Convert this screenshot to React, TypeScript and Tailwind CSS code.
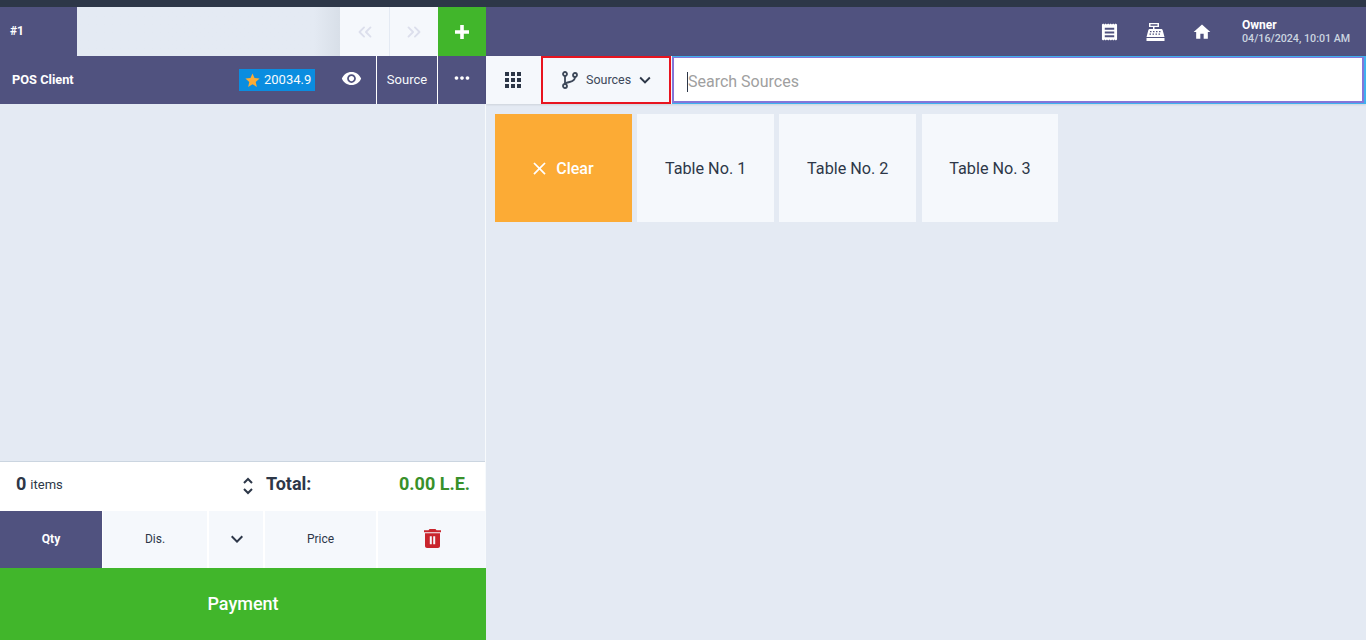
import React from "react";
import { MdRemoveRedEye, MdHome, MdMoreHoriz, MdStar, MdClose, MdKeyboardArrowDown, MdApps } from "react-icons/md";
import { LuChevronsLeft, LuChevronsRight } from "react-icons/lu";

const ReceiptIcon = () => (
  <svg width="18" height="18" viewBox="0 0 18 18" fill="currentColor" fillRule="evenodd">
    <path d="M1 1l1.3-1 1.3 1 1.3-1 1.3 1 1.4-1L9 1l1.3-1 1.3 1 1.3-1 1.3 1 1.3-1L17 1v16l-1.3 1-1.3-1-1.3 1-1.3-1-1.3 1L9 17l-1.3 1-1.4-1-1.3 1-1.3-1-1.4 1L1 17V1zm3 3.500v2h10v-2H4zm0 4v2h10v-2H4zm0 4v2h10v-2H4z" />
  </svg>
);

const RegisterIcon = () => (
  <svg width="19" height="18" viewBox="0 0 19 18" fill="currentColor" fillRule="evenodd">
    <path d="M3 0h10v4H8.500v2H15c.8 0 1.500.5 1.700 1.300L18.500 14H.5l1.800-6.700C2.500 6.500 3.200 6 4 6h3V4H3V0zm1.500 1.300v1.400h7V1.300h-7zM4 8v1.300h1.500V8H4zm3 0v1.300h1.500V8H7zm3 0v1.300h1.500V8H10zm3 0v1.300h1.500V8H13zM3.500 10.500v1.300H5v-1.300H3.500zm3 0v1.300H8v-1.300H6.500zm3 0v1.300H11v-1.300H9.500zm3 0v1.300H14v-1.300h-1.500zM.5 15h18v3H.5v-3z" />
  </svg>
);

const TrashIcon = () => (
  <svg width="17" height="19" viewBox="0 0 17 19" fill="currentColor" fillRule="evenodd">
    <path d="M5.500 0h6l1 1.200H17v2H0v-2h4.500L5.500 0zM1 4.200h15V17c0 1.100-.9 2-2 2H3c-1.100 0-2-.9-2-2V4.200zm4.800 3v8h2v-8h-2zm3.400 0v8h2v-8h-2z" />
  </svg>
);

const SortIcon = () => (
  <svg width="10" height="18" viewBox="0 0 10 18" fill="none" stroke="#2d3748" strokeWidth="2">
    <path d="M1 6l4-4 4 4" />
    <path d="M1 12l4 4 4-4" />
  </svg>
);

const BranchIcon = () => (
  <svg width="16" height="18" viewBox="0 0 16 18" fill="none" stroke="currentColor" strokeWidth="1.800">
    <circle cx="3" cy="3" r="2" />
    <circle cx="3" cy="15" r="2" />
    <circle cx="13" cy="4" r="2" />
    <path d="M3 5v8" />
    <path d="M13 6c0 3.500-3 4.500-5.500 5S3.500 12 3 13" />
  </svg>
);

const tables = ["Table No. 1", "Table No. 2", "Table No. 3"];

export default function App() {
  return (
    <div className="h-[640px] w-[1366px] overflow-hidden bg-[#e4eaf3] font-['Roboto',sans-serif] text-[#2d3748]">
      <div className="h-[7px] bg-[#2d3748]" />
      <div className="flex h-[633px]">
        {/* order side */}
        <div className="flex w-[486px] flex-col border-r border-[#f7fafc]">
          <div className="flex h-[49px] w-[486px]">
            <div className="flex w-[77px] items-center bg-[#50527f] pb-[2px] pl-[10px] text-xs font-bold text-white">#1</div>
            <div className="flex-1 bg-gradient-to-r from-[#e4eaf3] from-[90%] to-[#d8dfe8]" />
            <button className="flex w-[50px] items-center justify-center border-r border-[#e4eaf3] bg-[#f5f8fc] text-[#dcdfec]">
              <LuChevronsLeft size={22} />
            </button>
            <button className="flex w-[48px] items-center justify-center bg-[#f5f8fc] text-[#dcdfec]">
              <LuChevronsRight size={22} />
            </button>
            <button className="flex w-[48px] items-center justify-center bg-[#41b62b] text-white">
              <svg width="16" height="16" viewBox="0 0 16 16" fill="currentColor"><path d="M6.200 1h3.600v5.200H15v3.600H9.800V15H6.200V9.800H1V6.200h5.200z" /></svg>
            </button>
          </div>
          <div className="flex h-[48px] w-[486px] items-center bg-[#50527f] text-white">
            <div className="flex-1 pl-[12px] text-[12.800px] font-bold">POS Client</div>
            <div className="mr-[25px] flex h-[22px] w-[76px] items-center bg-[#0a8de0] pl-[5px] text-[13px] text-[#f7fafc]">
              <MdStar size={17} className="mr-[3px] text-[#fbab36]" />
              20034.9
            </div>
            <div className="mr-[14px] flex w-[22px] -translate-y-[2px] items-center justify-center">
              <MdRemoveRedEye size={21} />
            </div>
            <div className="flex h-full w-[61px] items-center justify-center border-l border-white text-[13px] text-[#f7fafc]">Source</div>
            <div className="flex h-full w-[49px] items-center justify-center border-l border-white">
              <MdMoreHoriz size={22} className="-translate-y-[2px]" />
            </div>
          </div>
          <div className="flex-1" />
          <div className="flex h-[50px] items-center border-t border-[#cbd5e0] bg-white pb-[6px] pl-[16px] pr-[15px]">
            <span className="text-lg font-bold leading-none">0</span>
            <span className="ml-[4px] mt-[2px] text-[13px]">items</span>
            <div className="ml-auto mr-[13px] mt-[4px]"><SortIcon /></div>
            <div className="flex w-[204px] justify-between whitespace-nowrap text-lg font-bold">
              <span>Total:</span>
              <span className="text-[#38902a]">0.00 L.E.</span>
            </div>
          </div>
          <div className="flex h-[57px] bg-white text-xs">
            <button className="w-[102px] bg-[#50527f] pb-[2px] font-bold text-white">Qty</button>
            <button className="ml-[1px] w-[104px] bg-[#f5f8fc] pb-[2px]">Dis.</button>
            <button className="ml-[2px] flex w-[54px] items-center justify-center bg-[#f5f8fc] pb-[2px] pl-[1px]">
              <MdKeyboardArrowDown size={24} />
            </button>
            <button className="ml-[2px] w-[111px] bg-[#f5f8fc] pb-[2px]">Price</button>
            <button className="ml-[2px] flex w-[107px] items-center justify-center bg-[#f5f8fc] pb-[2px] pl-[2px] text-[#c9252d]">
              <TrashIcon />
            </button>
          </div>
          <button className="h-[72px] w-[486px] bg-[#41b62b] text-lg font-medium text-white">Payment</button>
        </div>

        {/* products side */}
        <div className="flex flex-1 flex-col">
          <div className="flex h-[49px] items-center bg-[#50527f] text-white">
            <div className="ml-[615px] flex w-[17px] justify-center"><ReceiptIcon /></div>
            <div className="ml-[28px] flex w-[19px] justify-center"><RegisterIcon /></div>
            <div className="ml-[27px] flex w-[20px] justify-center"><MdHome size={22} /></div>
            <div className="ml-[30px] text-xs leading-[14px]">
              <div className="font-bold">Owner</div>
              <div className="text-[10.700px] font-medium text-[#cbd5e0]">04/16/2024, 10:01 AM</div>
            </div>
          </div>
          <div className="flex h-[48px] bg-[#f5f8fc] shadow-[0_1px_2px_rgba(0,0,0,0.1)]">
            <div className="flex w-[55px] items-center justify-center pr-[1px] text-[#2d3748]">
              <MdApps size={24} />
            </div>
            <button className="flex w-[130px] items-center border-2 border-[#e8141f] pl-[19px] text-[12.500px] text-[#3d4859]">
              <BranchIcon />
              <span className="ml-[8px]">Sources</span>
              <MdKeyboardArrowDown size={22} className="ml-[3px] text-[#2d3748]" />
            </button>
            <div className="relative ml-[1px] flex-1 bg-[#3fb0ef] py-px pr-[2px]">
              <input
                placeholder="Search Sources"
                className="h-full w-full border-2 border-t border-[#8476d8] bg-white pl-[14px] pt-[3px] text-base text-[#2d3748] outline-none placeholder:text-[#a0a0a0]"
              />
              {/* text cursor of the focused field */}
              <span className="absolute left-[15px] top-[16px] h-[20px] w-px bg-[#2d3748]" />
            </div>
          </div>
          <div className="flex gap-[5.400px] px-[9px] pt-[10px]">
            <button className="flex h-[108px] w-[136.800px] items-center justify-center gap-[6px] bg-[#fcab35] pr-[4px] pt-[2px] font-medium text-white">
              <MdClose size={21} className="-translate-y-[1px]" />
              Clear
            </button>
            {tables.map((table) => (
              <button key={table} className="h-[108px] w-[136.800px] bg-[#f5f8fc] pt-[2px] text-[16.200px] text-[#2d3748]">
                {table}
              </button>
            ))}
          </div>
        </div>
      </div>
    </div>
  );
}
